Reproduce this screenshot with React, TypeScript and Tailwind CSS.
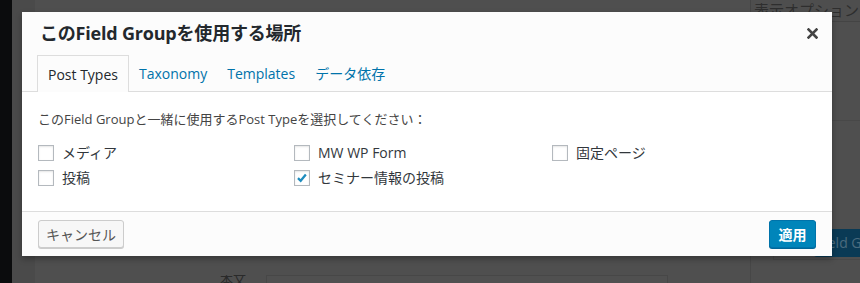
import React from "react";

const font = { fontFamily: '"Open Sans", "Noto Sans CJK JP", sans-serif' };

function Check({ checked, label }: { checked?: boolean; label: string }) {
  return (
    <label className="flex items-center gap-[8px] h-[25px]">
      <span className="w-[16px] h-[16px] border border-[#b4b9be] bg-white shadow-[inset_0_1px_2px_rgba(0,0,0,0.1)] flex items-center justify-center">
        {checked && (
          <svg width="16" height="16" viewBox="0 0 16 16">
            <path d="M3.4 8.2 L6.5 11.2 L12.4 4" fill="none" stroke="#1e8cbe" strokeWidth="2.6" />
          </svg>
        )}
      </span>
      <span className="text-[14px] text-[#32373c]">{label}</span>
    </label>
  );
}

export default function App() {
  return (
    <div className="relative w-[860px] h-[283px] overflow-hidden bg-[#4f4f4f]" style={font}>
      {/* dimmed background page */}
      <div className="flex h-full">
        <div className="w-[12px] bg-[#0b0c0d]" />
        <div className="w-[23px] bg-[#4a4a4a]" />
        <div className="flex-1 flex flex-col">
          <div className="flex justify-end h-[23px]">
            <div className="w-[110px] h-[22px] border-l border-b border-[#444] bg-[#4e4e4e] text-[15px] text-[#2e2e2e] pl-[3px] leading-[20px] whitespace-nowrap overflow-hidden">
              表示オプション
            </div>
          </div>
          <div className="flex-1 flex">
            <div className="w-[715px] flex flex-col justify-end">
              <div className="flex items-end pl-[185px] gap-[20px]">
                <span className="text-[13px] text-[#2a2a2a] leading-[8px] h-[8px] overflow-hidden">本文</span>
                <div className="w-[402px] h-[8px] border-t border-l border-r border-[#474747] bg-[#505050]" />
              </div>
            </div>
            <div className="flex-1 border-l border-[#474747] flex flex-col pt-[97px] pl-[22px]">
              <div className="h-[140px] border border-[#484848] border-r-0 relative">
                <div className="absolute left-[40px] top-[108px] w-[80px] h-[28px] bg-[#0a3a55] rounded-l-[3px] text-[14px] text-[#4a6b7e] pl-[3px] leading-[28px] overflow-hidden whitespace-nowrap">
                  Field G
                </div>
              </div>
            </div>
          </div>
        </div>
      </div>

      {/* modal */}
      <div className="absolute left-[22px] top-[12px] w-[810px] h-[244px] bg-white shadow-[0_3px_6px_rgba(0,0,0,0.3)] flex flex-col">
        <div className="h-[80px] bg-[#fcfcfc] border-b border-[#dddddd] flex flex-col">
          <div className="flex items-center justify-between pl-[18px] pr-[14px] h-[44px]">
            <h1 className="text-[18px] font-bold text-[#23282d] tracking-[-0.2px]">このField Groupを使用する場所</h1>
            <svg width="11" height="11" viewBox="0 0 11 11">
              <path d="M1.5 1.5 L9.5 9.5 M9.5 1.5 L1.5 9.5" stroke="#444" strokeWidth="2.6" strokeLinecap="square" />
            </svg>
          </div>
          <div className="flex items-end pl-[15px] h-[36px]">
            <div className="h-[37px] -mb-px border border-b-0 border-[#dddddd] bg-[#fcfcfc] px-[10px] flex items-center text-[14px] text-[#23282d]">
              Post Types
            </div>
            <div className="h-[36px] px-[10px] flex items-center text-[14px] text-[#0073aa]">Taxonomy</div>
            <div className="h-[36px] px-[10px] flex items-center text-[14px] text-[#0073aa]">Templates</div>
            <div className="h-[36px] px-[10px] flex items-center text-[14px] text-[#0073aa]">データ依存</div>
          </div>
        </div>
        <div className="flex-1 px-[16px] pt-[18px]">
          <p className="text-[13px] text-[#444] leading-[18px] mb-[12px]">このField Groupと一緒に使用するPost Typeを選択してください：</p>
          <div className="grid grid-cols-[256px_258px_1fr]">
            <Check label="メディア" />
            <Check label="MW WP Form" />
            <Check label="固定ページ" />
            <Check label="投稿" />
            <Check checked label="セミナー情報の投稿" />
          </div>
        </div>
        <div className="h-[45px] bg-[#fcfcfc] border-t border-[#dddddd] flex items-center justify-between px-[16px]">
          <button className="h-[28px] w-[86px] rounded-[3px] border border-[#cccccc] bg-[#f7f7f7] shadow-[0_1px_0_#ccc] text-[14px] text-[#555]">
            キャンセル
          </button>
          <button className="h-[28px] w-[47px] rounded-[3px] border border-[#0073aa] bg-[#0085ba] shadow-[0_1px_0_#006799] text-[14px] font-bold text-white">
            適用
          </button>
        </div>
      </div>
    </div>
  );
}
